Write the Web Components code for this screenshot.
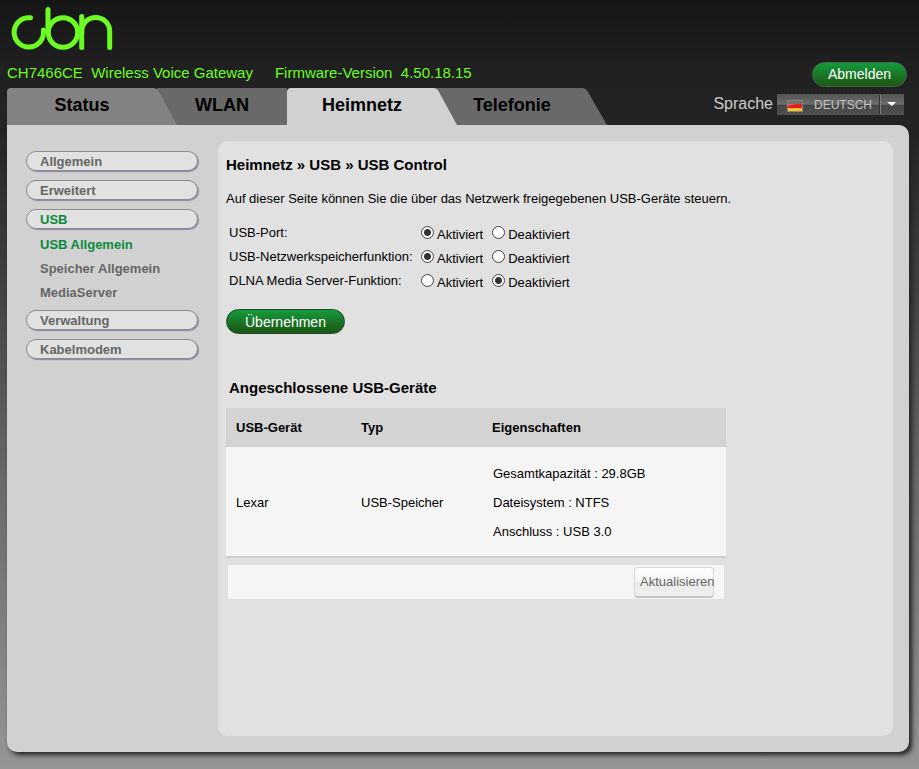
<!DOCTYPE html>
<html lang="de">
<head>
<meta charset="utf-8">
<title>Wireless Voice Gateway</title>
<style>
  html {
    min-height: 100%;
    background: linear-gradient(#161616 0, #202020 70px, #242424 130px, #3c3c3c 260px, #696969 480px, #888 680px, #959595 100%);
  }

  body {
    margin: 0;
    padding: 0 10px 17px 7px;
    min-height: 100vh;
    box-sizing: border-box;
    display: flex;
    flex-direction: column;
    font-family: "Liberation Sans", Arial, sans-serif;
    font-size: 13px;
    line-height: 16px;
    color: #000;
  }
</style>
</head>
<body>

<gateway-header model="CH7466CE" product="Wireless Voice Gateway" firmware="4.50.18.15"></gateway-header>
<gateway-tabs active="Heimnetz"></gateway-tabs>
<gateway-frame>
  <side-menu slot="menu"></side-menu>
  <usb-settings></usb-settings>
  <usb-devices></usb-devices>
</gateway-frame>

<script>
class CbnLogo extends HTMLElement {
  connectedCallback() {
    this.attachShadow({ mode: "open" }).innerHTML = `
    <style>
    :host { display: block; height: 44px; }
    svg { display: block; }
    </style>
    <svg width="104" height="44" viewBox="10 7 104 44" fill="none" stroke="#6cfc24" stroke-width="5" stroke-linecap="round" role="img" aria-label="cbn">
      <path d="M30.500 17.700H28A14.700 14.700 0 1 0 43.500 32.500V30"/>
      <path d="M48 9.500V32.500"/>
      <circle cx="63" cy="32.500" r="14.700"/>
      <path d="M81.700 16.500V47.500"/>
      <path d="M81.700 32.500V31A14 13.500 0 0 1 109.700 31V47.500"/>
    </svg>
    `;
  }
}

class GreenButton extends HTMLElement {
  connectedCallback() {
    this.attachShadow({ mode: "open" }).innerHTML = `
    <style>
    :host { display: block; }

    button {
      display: block;
      height: 25px;
      padding: 0 18px;
      border: 1px solid #1d4a2c;
      border-radius: 13px;
      background: linear-gradient(#149b3c, #1a7426 55%, #1b5612);
      color: #fff;
      font: 14px/20px "Liberation Sans", Arial, sans-serif;
      cursor: pointer;
    }

    :host([tight]) button { padding: 0 15px; border-color: #3f6b48; }
    button:hover { background: #149b3c; }
    </style>
    <button type="button"><slot></slot></button>
    `;
  }
}

class LanguagePicker extends HTMLElement {
  connectedCallback() {
    this.attachShadow({ mode: "open" }).innerHTML = `
    <style>
    :host { display: flex; align-items: center; gap: 4px; color: #ccc; }
    label { font-size: 16px; line-height: 20px; }

    .box {
      display: grid;
      grid-template-columns: 28px 74px 25px;
      align-items: center;
      height: 21px;
      background:
        repeating-conic-gradient(rgba(255, 255, 255, .05) 0 25%, transparent 0 50%) 0 0 / 4px 4px,
        linear-gradient(#505050, #6a6a6a 48%, #424242 54%, #4c4c4c);
    }

    svg { grid-row: 1; display: block; }
    .flag { grid-column: 1; margin: 3px 0 0 10px; }
    .arrow { grid-column: 3; justify-self: stretch; width: 25px; pointer-events: none; }

    select {
      grid-row: 1;
      grid-column: 1 / 4;
      width: 100%;
      height: 21px;
      padding: 2px 0 0 37px;
      border: 0;
      appearance: none;
      background: none;
      color: #c4c4c4;
      font: 12px/19px "Liberation Sans", Arial, sans-serif;
    }
    </style>
    <label for="language">Sprache</label>
    <div class="box">
      <svg class="flag" width="16" height="12" viewBox="0 0 16 12" aria-hidden="true">
        <rect width="16" height="12" fill="#8b8378"/>
        <rect x="1" y="1" width="14" height="3" fill="#404040"/>
        <rect x="1" y="4" width="14" height="4" fill="#e01c1c"/>
        <rect x="1" y="8" width="14" height="3" fill="#f5c52c"/>
        <path d="M1 1H15V4Q7 4 1 6Z" fill="#fff" opacity=".25"/>
      </svg>
      <svg class="arrow" height="21" viewBox="0 0 25 21" aria-hidden="true">
        <path d="M0.500 1V20" stroke="#333"/>
        <path d="M1.500 1V20" stroke="#808080"/>
        <path d="M8 8H17L13 12Z" fill="#fff"/>
      </svg>
      <select id="language">
        <option>DEUTSCH</option>
        <option>ENGLISH</option>
      </select>
    </div>
    `;
  }
}

class GatewayHeader extends HTMLElement {
  connectedCallback() {
    this.attachShadow({ mode: "open" }).innerHTML = `
    <style>
    :host { display: block; padding-top: 7px; }
    cbn-logo { margin-left: 3px; }

    .bar {
      display: flex;
      align-items: center;
      height: 26px;
      margin-top: 10px;
      padding-right: 2px;
      color: #6cfc24;
      font-size: 15px;
    }

    .firmware { margin-left: 22px; }
    span { padding-bottom: 2px; white-space: pre; }
    green-button { margin-left: auto; }
    </style>
    <cbn-logo></cbn-logo>
    <div class="bar">
      <span>${this.getAttribute("model")}  ${this.getAttribute("product")}</span>
      <span class="firmware">Firmware-Version  ${this.getAttribute("firmware")}</span>
      <green-button tight>Abmelden</green-button>
    </div>
    `;
  }
}

class GatewayTabs extends HTMLElement {
  connectedCallback() {
    const tabs = ["Status", "WLAN", "Heimnetz", "Telefonie"];
    const active = this.getAttribute("active");

    this.attachShadow({ mode: "open" }).innerHTML = `
    <style>
    :host {
      display: flex;
      justify-content: space-between;
      position: relative;
      z-index: 1;
      margin-top: 1px;
    }

    nav { display: flex; }

    a {
      display: grid;
      grid-template-columns: 100%;
      width: 150px;
      height: 37px;
      color: #000;
      font-size: 18px;
      font-weight: bold;
      line-height: 34px;
      text-align: center;
      text-decoration: none;
    }

    a > * { grid-area: 1 / 1; }
    a:nth-child(odd) { z-index: 2; }
    a:nth-child(2) { width: 130px; }
    svg { width: 170px; height: 37px; fill: #696969; }
    a:nth-child(1) svg { fill: #828282; }
    a:nth-child(2) svg { width: 130px; }
    a:nth-child(4) svg { width: 190px; margin-left: -20px; }
    a.active svg { fill: #d1d1d1; }
    span { z-index: 1; }
    language-picker { height: 32px; padding-right: 5px; }
    </style>
    <nav>
      ${tabs.map((tab, i) => `
      <a href="#${tab}" class="${tab === active ? "active" : ""}">
        <svg aria-hidden="true">
          <path d="${i === 1 ? "M-40 0H130V37H-40Z" : i === 3 ? "M0 0H165Q169 0 171 4L190 37H0Z" : "M0 37V4Q0 0 4 0H146Q150 0 152 4L170 37Z"}"/>
        </svg>
        <span>${tab}</span>
      </a>`).join("")}
    </nav>
    <language-picker></language-picker>
    `;
  }
}

class GatewayFrame extends HTMLElement {
  connectedCallback() {
    this.attachShadow({ mode: "open" }).innerHTML = `
    <style>
    :host {
      display: grid;
      grid-template-columns: 211px minmax(0, 1fr);
      flex: 1;
      padding: 16px 16px 16px 0;
      border-radius: 0 10px 10px 10px;
      background: #d1d1d1;
      box-shadow: 3px 3px 5px #222;
    }

    main { border-radius: 10px; background: #e1e1e1; padding: 15px 8px; }
    </style>
    <slot name="menu"></slot>
    <main><slot></slot></main>
    `;
  }
}

class SideMenu extends HTMLElement {
  connectedCallback() {
    this.attachShadow({ mode: "open" }).innerHTML = `
    <style>
    :host { display: block; padding: 10px 20px 0 19px; }
    ul { margin: 0; padding: 0; list-style: none; }

    a {
      display: block;
      color: #666;
      font-weight: bold;
      text-decoration: none;
    }

    .group {
      height: 20px;
      box-sizing: border-box;
      margin-bottom: 9px;
      padding-left: 13px;
      border: 1px solid #8c8c8c;
      border-radius: 10px;
      background: #e1e1e1;
      box-shadow: 1px 1px 1px #8888a8;
      line-height: 19px;
    }

    .item { padding-left: 14px; line-height: 24px; }
    li ul { margin: -5px 0 5px; }
    .current { color: #0b8b3e; }
    </style>
    <nav>
      <ul>
        <li><a class="group" href="#allgemein">Allgemein</a></li>
        <li><a class="group" href="#erweitert">Erweitert</a></li>
        <li>
          <a class="group current" href="#usb">USB</a>
          <ul>
            <li><a class="item current" href="#usb-allgemein">USB Allgemein</a></li>
            <li><a class="item" href="#speicher">Speicher Allgemein</a></li>
            <li><a class="item" href="#mediaserver">MediaServer</a></li>
          </ul>
        </li>
        <li><a class="group" href="#verwaltung">Verwaltung</a></li>
        <li><a class="group" href="#kabelmodem">Kabelmodem</a></li>
      </ul>
    </nav>
    `;
  }
}

class UsbSettings extends HTMLElement {
  connectedCallback() {
    const rows = [
      { name: "port", label: "USB-Port:", on: true },
      { name: "storage", label: "USB-Netzwerkspeicherfunktion:", on: true },
      { name: "dlna", label: "DLNA Media Server-Funktion:", on: false }
    ];

    this.attachShadow({ mode: "open" }).innerHTML = `
    <style>
    :host { display: block; }
    h1 { margin: 0; font-size: 15px; line-height: 18px; }
    p { margin: 17px 0 18px; }

    .row { display: flex; height: 24px; padding-left: 3px; }
    .row > span { width: 192px; }
    label { display: flex; align-items: center; gap: 3px; height: 19px; margin-right: 9px; }

    input {
      appearance: none;
      width: 13px;
      height: 13px;
      margin: 0 0 4px;
      box-sizing: border-box;
      border: 1px solid #444;
      border-radius: 50%;
      background: #fff;
    }

    input:checked { background: radial-gradient(circle, #333 3px, #fff 4px); }
    green-button { margin-top: 12px; }
    </style>
    <h1>Heimnetz » USB » USB Control</h1>
    <p>Auf dieser Seite können Sie die über das Netzwerk freigegebenen USB-Geräte steuern.</p>
    ${rows.map(row => `
    <div class="row" role="radiogroup" aria-labelledby="${row.name}">
      <span id="${row.name}">${row.label}</span>
      <label><input type="radio" name="${row.name}" ${row.on ? "checked" : ""}>Aktiviert</label>
      <label><input type="radio" name="${row.name}" ${row.on ? "" : "checked"}>Deaktiviert</label>
    </div>`).join("")}
    <green-button>Übernehmen</green-button>
    `;
  }
}

class UsbDevices extends HTMLElement {
  connectedCallback() {
    this.attachShadow({ mode: "open" }).innerHTML = `
    <style>
    :host { display: block; max-width: 500px; margin-top: 45px; }
    h2 { margin: 0 3px 11px; font-size: 15px; line-height: 18px; }
    table { width: 100%; border-collapse: collapse; table-layout: fixed; }
    th, td { padding: 2px 0 0 10px; text-align: left; }
    th { height: 36px; background: #d3d3d3; border-bottom: 1px solid #d1cccd; }
    td { height: 107px; background: #f5f5f5; border-bottom: 2px solid #d1cccd; line-height: 29px; }
    th:nth-child(1) { width: 115px; }
    th:nth-child(2) { width: 121px; }
    td:last-child { padding-left: 11px; }

    .tools {
      display: flex;
      justify-content: flex-end;
      margin: 7px 2px 0;
      padding: 2px 10px 1px 0;
      background: #f5f5f5;
    }

    button {
      width: 80px;
      height: 31px;
      padding: 0 0 0 5px;
      border: 1px solid #d8d8d8;
      border-bottom: 2px solid #c4c4c4;
      border-radius: 4px;
      background: linear-gradient(#fcfcfc, #f6f6f6 50%, #ececec 52%, #eee);
      color: #666;
      font: 13px/16px "Liberation Sans", Arial, sans-serif;
      text-align: left;
      white-space: nowrap;
    }
    </style>
    <h2>Angeschlossene USB-Geräte</h2>
    <table>
      <thead>
        <tr><th>USB-Gerät</th><th>Typ</th><th>Eigenschaften</th></tr>
      </thead>
      <tbody>
        <tr>
          <td>Lexar</td>
          <td>USB-Speicher</td>
          <td>Gesamtkapazität : 29.8GB<br>Dateisystem : NTFS<br>Anschluss : USB 3.0</td>
        </tr>
      </tbody>
    </table>
    <div class="tools"><button type="button">Aktualisieren</button></div>
    `;
  }
}

customElements.define("cbn-logo", CbnLogo);
customElements.define("green-button", GreenButton);
customElements.define("language-picker", LanguagePicker);
customElements.define("gateway-header", GatewayHeader);
customElements.define("gateway-tabs", GatewayTabs);
customElements.define("gateway-frame", GatewayFrame);
customElements.define("side-menu", SideMenu);
customElements.define("usb-settings", UsbSettings);
customElements.define("usb-devices", UsbDevices);
</script>
</body>
</html>
